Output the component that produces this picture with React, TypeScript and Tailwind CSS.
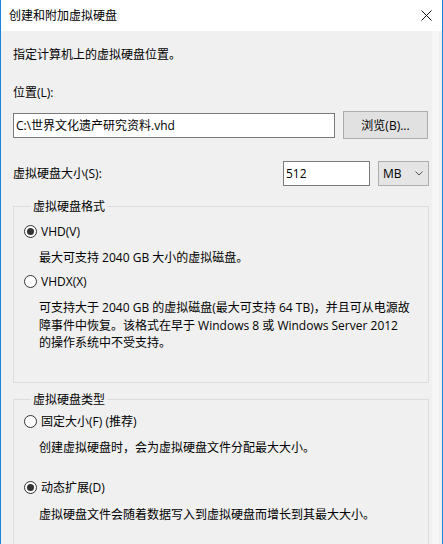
import React from "react";

const font = {
  fontFamily: '"Open Sans", "Noto Sans CJK SC", sans-serif',
};

function Radio({ checked, label }: { checked?: boolean; label: string }) {
  return (
    <label className="flex h-[17px] items-center">
      <span className="flex h-[13px] w-[13px] items-center justify-center rounded-full border border-[#333333] bg-white">
        {checked && <span className="h-[7px] w-[7px] rounded-full bg-[#333333]" />}
      </span>
      <span className="ml-[4px] leading-[17px]">{label}</span>
    </label>
  );
}

function Group({ title, children }: { title: string; children: React.ReactNode }) {
  return (
    <fieldset className="border border-[#dcdcdc] pl-[10px] pr-[4px]">
      <legend className="ml-[7px] px-[2px] leading-[17px]">{title}</legend>
      {children}
    </fieldset>
  );
}

export default function App() {
  return (
    <div
      className="flex h-[544px] w-[443px] flex-col overflow-hidden border-x border-[#1883d7] bg-[#f0f0f0] text-[12px] text-black"
      style={font}
    >
      <div className="flex h-[31px] shrink-0 items-center justify-between bg-white pl-[8px] pr-[9px]">
        <span className="leading-[17px]">创建和附加虚拟硬盘</span>
        <svg width="11" height="11" viewBox="0 0 11 11" className="mr-[1px]">
          <path d="M0.5 0.5 L10.5 10.5 M10.5 0.5 L0.5 10.5" stroke="#111" strokeWidth="1" />
        </svg>
      </div>

      <div className="flex flex-1">
        <div className="flex w-[431px] shrink-0 flex-col pl-[12px] pr-[3px]">
          <p className="mt-[15px] leading-[17px]">指定计算机上的虚拟硬盘位置。</p>

          <p className="mt-[21px] leading-[17px]">位置(L):</p>
          <div className="mt-[10px] flex items-center gap-[8px]">
            <div className="flex h-[25px] w-[322px] items-center border border-[#7a7a7a] bg-white px-[2px] leading-[17px]">
              C:\世界文化遗产研究资料.vhd
            </div>
            <button className="flex h-[28px] w-[85px] items-center justify-center border border-[#adadad] bg-[#e1e1e1] leading-[17px]">
              浏览(B)...
            </button>
          </div>

          <div className="mt-[22px] flex items-center">
            <span className="leading-[17px]">虚拟硬盘大小(S):</span>
            <div className="ml-auto flex h-[25px] w-[87px] items-center border border-[#7a7a7a] bg-white px-[2px] leading-[17px]">
              512
            </div>
            <div className="ml-[8px] flex h-[25px] w-[51px] items-center justify-between border border-[#adadad] bg-[#e5e5e5] pl-[4px] pr-[5px] leading-[17px]">
              <span>MB</span>
              <svg width="8" height="5" viewBox="0 0 8 5">
                <path d="M0.5 0.5 L4 4 L7.5 0.5" stroke="#555" strokeWidth="1" fill="none" />
              </svg>
            </div>
          </div>

          <div className="mt-[12px]">
            <Group title="虚拟硬盘格式">
              <div className="mt-[8px] pb-[30px]">
                <Radio checked label="VHD(V)" />
                <p className="mt-[9px] pl-[15px] leading-[17px]">最大可支持 2040 GB 大小的虚拟磁盘。</p>
                <div className="mt-[7px]">
                  <Radio label="VHDX(X)" />
                </div>
                <p className="mt-[9px] whitespace-nowrap pl-[15px] leading-[17.5px]">
                  可支持大于 2040 GB 的虚拟磁盘(最大可支持 64 TB)，并且可从电源故
                  <br />
                  障事件中恢复。该格式在早于 Windows 8 或 Windows Server 2012
                  <br />
                  的操作系统中不受支持。
                </p>
              </div>
            </Group>
          </div>

          <div className="mt-[8px]">
            <Group title="虚拟硬盘类型">
              <div className="mt-[5px] pb-[30px]">
                <Radio label="固定大小(F) (推荐)" />
                <p className="mt-[9px] pl-[15px] leading-[17px]">创建虚拟硬盘时，会为虚拟硬盘文件分配最大大小。</p>
                <div className="mt-[23px]">
                  <Radio checked label="动态扩展(D)" />
                </div>
                <p className="mt-[10px] pl-[15px] leading-[17px]">虚拟硬盘文件会随着数据写入到虚拟硬盘而增长到其最大大小。</p>
              </div>
            </Group>
          </div>
        </div>
        <div className="w-[7px] shrink-0 bg-[#f6f6f6]" />
      </div>
    </div>
  );
}
